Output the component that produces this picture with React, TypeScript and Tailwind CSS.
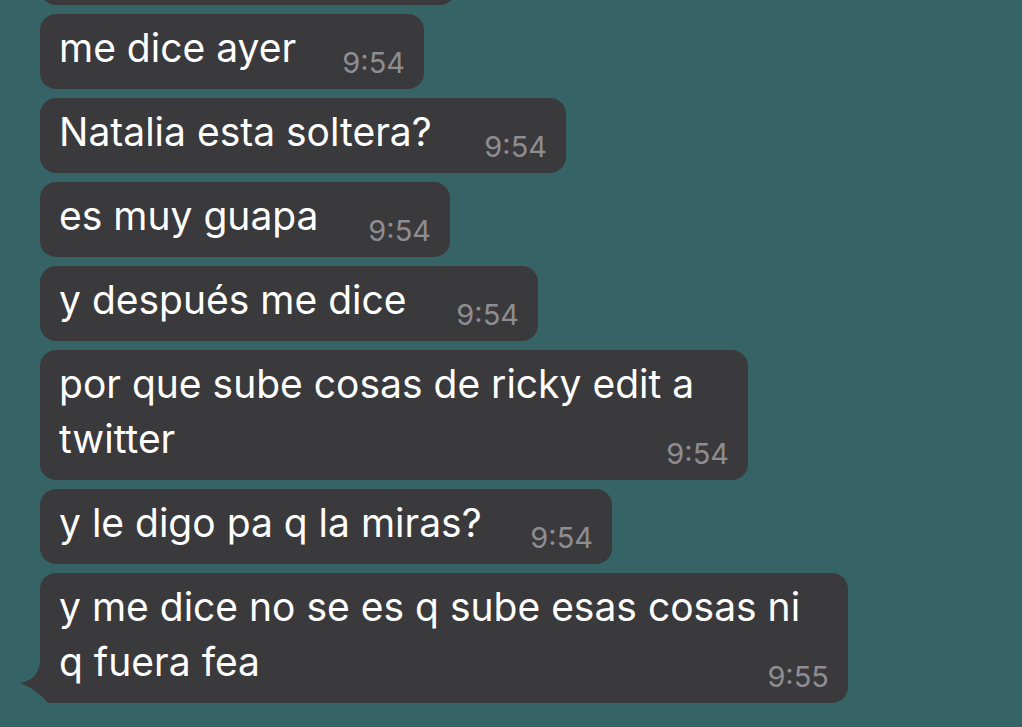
import React from "react";

type Msg = { lines: string[]; time: string; w: string; tail?: boolean };

const msgs: Msg[] = [
  { lines: ["me dice ayer"], time: "9:54", w: "w-[384px]" },
  { lines: ["Natalia esta soltera?"], time: "9:54", w: "w-[526px]" },
  { lines: ["es muy guapa"], time: "9:54", w: "w-[410px]" },
  { lines: ["y después me dice"], time: "9:54", w: "w-[498px]" },
  { lines: ["por que sube cosas de ricky edit a", "twitter"], time: "9:54", w: "w-[708px]" },
  { lines: ["y le digo pa q la miras?"], time: "9:54", w: "w-[572px]" },
  { lines: ["y me dice no se es q sube esas cosas ni", "q fuera fea"], time: "9:55", w: "w-[808px]", tail: true },
];

function Bubble({ m }: { m: Msg }) {
  return (
    <div className={`relative ${m.w} rounded-[16px] bg-[#3a393c] pl-[19px] pr-[19px] pt-[6px] pb-[14px]`}>
      {m.tail && (
        <svg
          className="absolute left-[-20px] bottom-0"
          width="40"
          height="43"
          viewBox="0 0 40 43"
        >
          <path d="M20 0 Q19 20 0 23 Q16 29 28 43 L40 43 L40 0 Z" fill="#3a393c" />
        </svg>
      )}
      <div className="relative text-[39px] leading-[55px] text-white whitespace-nowrap">
        {m.lines.map((l, i) => (
          <div key={i}>{l}</div>
        ))}
      </div>
      <span className="absolute right-[19px] bottom-[12px] text-[29px] leading-[29px] text-[#8e8d92]">
        {m.time}
      </span>
    </div>
  );
}

export default function App() {
  return (
    <div
      className="w-[1022px] h-[727px] overflow-hidden bg-[#366466]"
      style={{ fontFamily: "Inter, 'Noto Sans', sans-serif" }}
    >
      <div className="flex flex-col items-start gap-[9px] pl-[40px]">
        <div className="w-[416px] h-[75px] -mt-[70px] rounded-[16px] bg-[#3a393c]" />
        {msgs.map((m, i) => (
          <Bubble key={i} m={m} />
        ))}
      </div>
    </div>
  );
}
